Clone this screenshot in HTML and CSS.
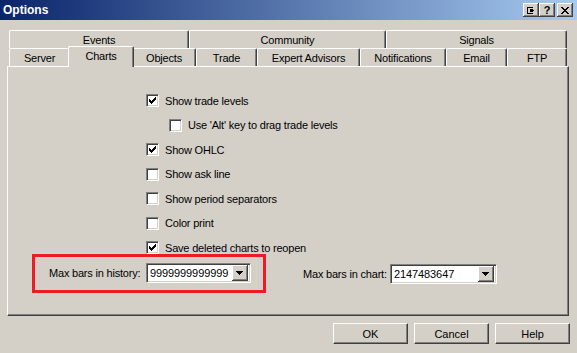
FILE: index.html
```html
<!DOCTYPE html>
<html lang="en">
<head>
    <meta charset="UTF-8">
    <meta name="viewport" content="width=device-width, initial-scale=1.0">
    <title>Options</title>
    <link rel="stylesheet" href="styles.css">
</head>
<body>
    <div class="window">
        <div class="titlebar">
            <span class="title">Options</span>
            <div class="caption-buttons">
                <span class="cap-btn">
                    <svg width="8" height="7" viewBox="0 0 8 7" shape-rendering="crispEdges">
                        <path d="M0 0h6v1H1v5h5v1H0z M3 2h1v3H3z M4 2h1v3H4z" fill="#000"/>
                        <path d="M3 3h4v1H3z M5 2h1v3H5z" fill="#000"/>
                    </svg>
                </span>
                <span class="cap-btn help">?</span>
                <span class="cap-btn close">
                    <svg width="8" height="7" viewBox="0 0 8 7" shape-rendering="crispEdges">
                        <path d="M0 0h2v1H0z M6 0h2v1H6z M1 1h2v1H1z M5 1h2v1H5z M2 2h4v1H2z M3 3h2v1H3z M2 4h4v1H2z M1 5h2v1H1z M5 5h2v1H5z M0 6h2v1H0z M6 6h2v1H6z" fill="#000"/>
                    </svg>
                </span>
            </div>
        </div>

        <div class="tabs">
            <div class="tab-row">
                <div class="tab tab-events">Events</div>
                <div class="tab tab-community">Community</div>
                <div class="tab tab-signals">Signals</div>
            </div>
            <div class="tab-row">
                <div class="tab tab-server">Server</div>
                <div class="tab tab-charts active">Charts</div>
                <div class="tab tab-objects">Objects</div>
                <div class="tab tab-trade">Trade</div>
                <div class="tab tab-experts">Expert Advisors</div>
                <div class="tab tab-notifications">Notifications</div>
                <div class="tab tab-email">Email</div>
                <div class="tab tab-ftp">FTP</div>
            </div>
        </div>

        <div class="panel">
            <div class="checks">
                <label class="check"><span class="box checked"></span>Show trade levels</label>
                <label class="check nested"><span class="box"></span>Use 'Alt' key to drag trade levels</label>
                <label class="check"><span class="box checked"></span>Show OHLC</label>
                <label class="check"><span class="box"></span>Show ask line</label>
                <label class="check"><span class="box"></span>Show period separators</label>
                <label class="check"><span class="box"></span>Color print</label>
                <label class="check"><span class="box checked"></span>Save deleted charts to reopen</label>
            </div>

            <div class="bars-row">
                <div class="field redbox">
                    <span class="field-label history-label">Max bars in history:</span>
                    <div class="combo history-combo">
                        <span class="combo-value">9999999999999</span>
                        <span class="combo-btn"></span>
                    </div>
                </div>
                <div class="field chart-field">
                    <span class="field-label chart-label">Max bars in chart:</span>
                    <div class="combo chart-combo">
                        <span class="combo-value">2147483647</span>
                        <span class="combo-btn"></span>
                    </div>
                </div>
            </div>
        </div>

        <div class="footer">
            <button class="btn">OK</button>
            <button class="btn">Cancel</button>
            <button class="btn">Help</button>
        </div>
    </div>
</body>
</html>
```

FILE: styles.css
```css
* {
    box-sizing: border-box;
}
body {
    margin: 0;
    background-color: #d4d0c8;
    font-family: "Liberation Sans", Arial, sans-serif;
    font-size: 11px;
    letter-spacing: -0.2px;
    color: #000;
}
.window {
    width: 577px;
    height: 353px;
    overflow: hidden;
}

/* title bar */
.titlebar {
    height: 20px;
    display: flex;
    align-items: center;
    justify-content: space-between;
    padding: 0 4px 0 3px;
    background: linear-gradient(to right, #0a246a, #a6caf0);
}
.title {
    color: #fff;
    font-weight: bold;
    font-size: 12px;
    letter-spacing: 0;
}
.caption-buttons {
    display: flex;
}
.cap-btn {
    width: 16px;
    height: 14px;
    display: flex;
    align-items: center;
    justify-content: center;
    background-color: #d4d0c8;
    box-shadow: inset -1px -1px #404040, inset 1px 1px #fff, inset -2px -2px #808080;
}
.cap-btn.help {
    font-weight: bold;
    font-size: 11px;
    line-height: 14px;
    padding-bottom: 1px;
}
.cap-btn.close {
    margin-left: 2px;
}

/* tabs */
.tabs {
    padding: 10px 0 0 9px;
}
.tab-row {
    display: flex;
    height: 18px;
}
.tab {
    height: 18px;
    display: flex;
    align-items: center;
    justify-content: center;
    padding-top: 1px;
    border-top: 1px solid #fff;
    border-left: 1px solid #fff;
    border-right: 1px solid #404040;
    border-radius: 2px 2px 0 0;
    box-shadow: inset -1px 0 #808080;
    background-color: #d4d0c8;
}
.tab-events { width: 180px; }
.tab-community { width: 197px; }
.tab-signals { width: 181px; }
.tab-server { width: 61px; }
.tab-charts { width: 66px; }
.tab-objects { width: 64px; }
.tab-trade { width: 61px; }
.tab-experts { width: 103px; }
.tab-notifications { width: 86px; }
.tab-email { width: 61px; }
.tab-ftp { width: 60px; }
.tab.active {
    height: 21px;
    margin: -2px -2px 0;
    padding: 0 0 3px;
    position: relative;
    z-index: 1;
}

/* panel */
.panel {
    margin-left: 7px;
    width: 562px;
    height: 250px;
    border: 1px solid;
    border-color: #fff #404040 #404040 #fff;
    box-shadow: inset -1px -1px #808080;
    padding-top: 27px;
}
.checks {
    display: flex;
    flex-direction: column;
    gap: 11.5px;
    margin-left: 138px;
}
.check {
    display: flex;
    align-items: center;
    gap: 6px;
    height: 13px;
    white-space: nowrap;
}
.check.nested {
    margin-left: 23px;
}
.box {
    width: 13px;
    height: 13px;
    flex: none;
    background-color: #fff;
    border: 1px solid;
    border-color: #808080 #fff #fff #808080;
    box-shadow: inset 1px 1px #404040, inset -1px -1px #d4d0c8;
}
.box.checked {
    background: #fff url("data:image/svg+xml,%3Csvg xmlns='http://www.w3.org/2000/svg' width='7' height='7' shape-rendering='crispEdges'%3E%3Cpolygon points='0,2 1,2 1,3 2,3 2,4 3,4 3,3 4,3 4,2 5,2 5,1 6,1 6,0 7,0 7,3 6,3 6,4 5,4 5,5 4,5 4,6 3,6 3,7 2,7 2,6 1,6 1,5 0,5'/%3E%3C/svg%3E") no-repeat 2px 2px;
}

/* max bars fields */
.bars-row {
    display: flex;
    align-items: center;
    margin-left: 24px;
}
.field {
    display: flex;
    align-items: center;
}
.redbox {
    border: 3px solid #ed1c24;
    padding: 6px 12px 7px 14px;
}
.chart-field {
    margin-left: 37px;
}
.field-label {
    white-space: nowrap;
}
.history-label { width: 97px; }
.chart-label { width: 87px; }
.combo {
    height: 20px;
    display: flex;
    align-items: center;
    padding: 2px;
    background-color: #fff;
    border: 1px solid;
    border-color: #808080 #fff #fff #808080;
    box-shadow: inset 1px 1px #404040, inset -1px -1px #d4d0c8;
}
.history-combo { width: 105px; }
.chart-combo { width: 107px; }
.combo-value {
    flex: 1;
    padding-left: 1px;
    letter-spacing: -0.1px;
}
.combo-btn {
    width: 16px;
    height: 16px;
    flex: none;
    background: #d4d0c8 url("data:image/svg+xml,%3Csvg xmlns='http://www.w3.org/2000/svg' width='7' height='4' shape-rendering='crispEdges'%3E%3Cpolygon points='0,0 7,0 7,1 6,1 6,2 5,2 5,3 4,3 4,4 3,4 3,3 2,3 2,2 1,2 1,1 0,1'/%3E%3C/svg%3E") no-repeat 4px 6px;
    box-shadow: inset -1px -1px #404040, inset 1px 1px #fff, inset -2px -2px #808080;
}

/* buttons */
.footer {
    display: flex;
    justify-content: flex-end;
    gap: 6px;
    padding: 7px 7px 0 0;
}
.btn {
    width: 75px;
    height: 21px;
    padding: 0;
    font: inherit;
    color: #000;
    background-color: #d4d0c8;
    border: 1px solid;
    border-color: #fff #404040 #404040 #fff;
    box-shadow: inset -1px -1px #808080;
}
```
